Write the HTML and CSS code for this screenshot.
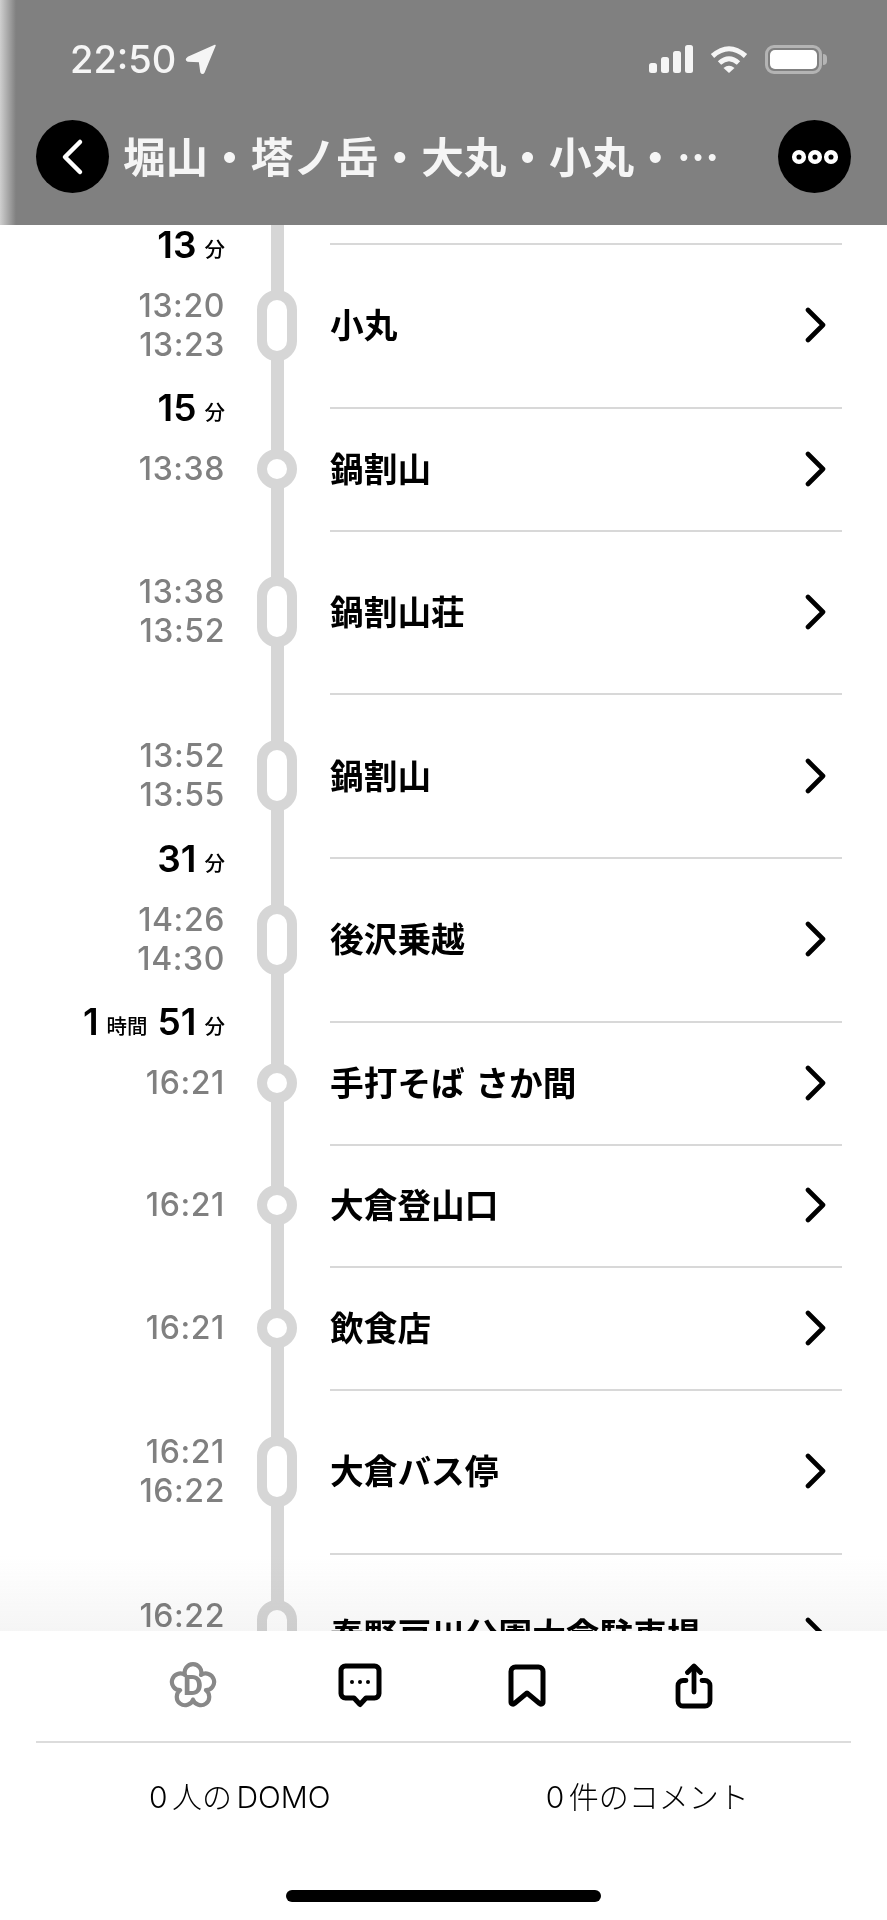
FILE: index.html
```html
<!DOCTYPE html>
<html lang="ja">
<head>
    <meta charset="utf-8">
    <title>堀山・塔ノ岳・大丸・小丸</title>
    <link rel="stylesheet" href="styles.css">
</head>
<body>
    <header class="top">
        <div class="status">
            <div class="clock">
                <span>22:50</span>
                <svg width="32" height="31" viewBox="0 0 32 31"><path d="M30 1.5 L3 13.5 Q0 15.5 3 17 L14.5 17.5 L16 28 Q17.5 30.5 19 28 Z" fill="#f5f5f5" stroke="#f5f5f5" stroke-width="1.5" stroke-linejoin="round"/></svg>
            </div>
            <div class="indicators">
                <svg width="44" height="28" viewBox="0 0 44 28"><g fill="#f5f5f5"><rect x="0" y="18" width="8" height="10" rx="2.5"/><rect x="12" y="12" width="8" height="16" rx="2.5"/><rect x="24" y="6" width="8" height="22" rx="2.5"/><rect x="36" y="0" width="8" height="28" rx="2.5"/></g></svg>
                <svg width="38" height="28" viewBox="0 0 38 28"><g fill="none" stroke="#f5f5f5" stroke-width="5"><path d="M2.5 11 Q19 -3.5 35.5 11"/><path d="M9.5 18 Q19 9.5 28.5 18"/></g><path d="M13.5 23 Q19 18.5 24.5 23 L19 28 Z" fill="#f5f5f5"/></svg>
                <div class="battery"><div class="charge"></div></div>
            </div>
        </div>
        <nav class="bar">
            <div class="round">
                <svg width="24" height="38" viewBox="0 0 24 38"><path d="M19 4 L4 19 L19 34" fill="none" stroke="#fff" stroke-width="4.5" stroke-linecap="round" stroke-linejoin="round"/></svg>
            </div>
            <h1 class="title">堀山・塔ノ岳・大丸・小丸・…</h1>
            <div class="round">
                <svg width="50" height="16" viewBox="0 0 50 16"><g fill="none" stroke="#fff" stroke-width="4.5"><circle cx="9" cy="8" r="4.8"/><circle cx="25" cy="8" r="4.8"/><circle cx="41" cy="8" r="4.8"/></g></svg>
            </div>
        </nav>
    </header>

    <main class="list">
        <div class="fade"></div>

        <div class="row row-top">
            <div class="times"></div>
            <div class="rail"></div>
            <div class="stop"></div>
        </div>
        <div class="leg"><b>13</b><small>分</small></div>

        <div class="row row-long">
            <div class="times"><span>13:20</span><span>13:23</span></div>
            <div class="rail"><i class="pill"></i></div>
            <div class="stop"><span class="name">小丸</span><svg class="chev" width="22" height="36" viewBox="0 0 22 36"><path d="M3 3 L18 18 L3 33" /></svg></div>
        </div>
        <div class="leg"><b>15</b><small>分</small></div>

        <div class="row">
            <div class="times"><span>13:38</span></div>
            <div class="rail"><i class="dot"></i></div>
            <div class="stop"><span class="name">鍋割山</span><svg class="chev" width="22" height="36" viewBox="0 0 22 36"><path d="M3 3 L18 18 L3 33" /></svg></div>
        </div>

        <div class="row row-long">
            <div class="times"><span>13:38</span><span>13:52</span></div>
            <div class="rail"><i class="pill"></i></div>
            <div class="stop"><span class="name">鍋割山荘</span><svg class="chev" width="22" height="36" viewBox="0 0 22 36"><path d="M3 3 L18 18 L3 33" /></svg></div>
        </div>

        <div class="row row-long">
            <div class="times"><span>13:52</span><span>13:55</span></div>
            <div class="rail"><i class="pill"></i></div>
            <div class="stop"><span class="name">鍋割山</span><svg class="chev" width="22" height="36" viewBox="0 0 22 36"><path d="M3 3 L18 18 L3 33" /></svg></div>
        </div>
        <div class="leg"><b>31</b><small>分</small></div>

        <div class="row row-long">
            <div class="times"><span>14:26</span><span>14:30</span></div>
            <div class="rail"><i class="pill"></i></div>
            <div class="stop"><span class="name">後沢乗越</span><svg class="chev" width="22" height="36" viewBox="0 0 22 36"><path d="M3 3 L18 18 L3 33" /></svg></div>
        </div>
        <div class="leg"><b>1</b><small>時間</small><b class="next">51</b><small>分</small></div>

        <div class="row">
            <div class="times"><span>16:21</span></div>
            <div class="rail"><i class="dot"></i></div>
            <div class="stop"><span class="name">手打そば さか間</span><svg class="chev" width="22" height="36" viewBox="0 0 22 36"><path d="M3 3 L18 18 L3 33" /></svg></div>
        </div>

        <div class="row">
            <div class="times"><span>16:21</span></div>
            <div class="rail"><i class="dot"></i></div>
            <div class="stop"><span class="name">大倉登山口</span><svg class="chev" width="22" height="36" viewBox="0 0 22 36"><path d="M3 3 L18 18 L3 33" /></svg></div>
        </div>

        <div class="row">
            <div class="times"><span>16:21</span></div>
            <div class="rail"><i class="dot"></i></div>
            <div class="stop"><span class="name">飲食店</span><svg class="chev" width="22" height="36" viewBox="0 0 22 36"><path d="M3 3 L18 18 L3 33" /></svg></div>
        </div>

        <div class="row row-long">
            <div class="times"><span>16:21</span><span>16:22</span></div>
            <div class="rail"><i class="pill"></i></div>
            <div class="stop"><span class="name">大倉バス停</span><svg class="chev" width="22" height="36" viewBox="0 0 22 36"><path d="M3 3 L18 18 L3 33" /></svg></div>
        </div>

        <div class="row row-long">
            <div class="times"><span>16:22</span><span></span></div>
            <div class="rail"><i class="pill"></i></div>
            <div class="stop"><span class="name">秦野戸川公園大倉駐車場</span><svg class="chev" width="22" height="36" viewBox="0 0 22 36"><path d="M3 3 L18 18 L3 33" /></svg></div>
        </div>
    </main>

    <footer class="bottom">
        <div class="actions">
            <svg width="48" height="48" viewBox="0 0 46 46">
                <path d="M15.36 12.48 A8 8 0 1 1 30.64 12.48 A8 8 0 1 1 35.36 27.02 A8 8 0 1 1 23 36 A8 8 0 1 1 10.64 27.02 A8 8 0 1 1 15.36 12.48 Z" fill="none" stroke="#888" stroke-width="4" stroke-linejoin="round"/>
                <text class="domo-mark" x="23" y="32" text-anchor="middle">D</text>
            </svg>
            <svg width="44" height="46" viewBox="0 0 44 46">
                <path d="M7.5 3 H36.5 a4.5 4.5 0 0 1 4.5 4.5 V30.5 a4.5 4.5 0 0 1 -4.5 4.5 H28 L22 41.5 L16 35 H7.5 a4.5 4.5 0 0 1 -4.5 -4.5 V7.5 a4.5 4.5 0 0 1 4.5 -4.5 Z" fill="none" stroke="#000" stroke-width="5" stroke-linejoin="round"/>
                <circle cx="14" cy="19" r="2"/><circle cx="22" cy="19" r="2"/><circle cx="30" cy="19" r="2"/>
            </svg>
            <svg width="38" height="44" viewBox="0 0 38 44">
                <path d="M7.5 3 H30.5 a4.5 4.5 0 0 1 4.5 4.5 V38 a2 2 0 0 1 -3.4 1.5 L19 29 L6.4 39.5 A2 2 0 0 1 3 38 V7.5 a4.5 4.5 0 0 1 4.5 -4.5 Z" fill="none" stroke="#000" stroke-width="5" stroke-linejoin="round"/>
            </svg>
            <svg width="38" height="46" viewBox="0 0 38 46" fill="none" stroke="#000" stroke-width="4.8" stroke-linecap="round" stroke-linejoin="round">
                <path d="M11 17.5 H8 a5 5 0 0 0 -5 5 V38 a5 5 0 0 0 5 5 H30 a5 5 0 0 0 5 -5 V22.5 a5 5 0 0 0 -5 -5 H27"/>
                <path d="M19 29 V4"/>
                <path d="M12.5 9.5 L19 3 L25.5 9.5"/>
            </svg>
        </div>
        <div class="stats">
            <span>0 人の DOMO</span>
            <span>0 件のコメント</span>
        </div>
        <div class="home"></div>
    </footer>
</body>
</html>
```

FILE: styles.css
```css
* {
    box-sizing: border-box;
}

body {
    margin: 0;
    width: 887px;
    height: 1920px;
    display: flex;
    flex-direction: column;
    overflow: hidden;
    background-color: #fff;
    color: #000;
    font-family: Inter, "Noto Sans CJK JP", sans-serif;
}

/* header */
.top {
    height: 225px;
    flex: none;
    padding: 44px 36px 32px;
    background: linear-gradient(90deg, #cfcfcf 0, #808080 16px) #808080;
    color: #f5f5f5;
}

.status {
    height: 30px;
    margin-bottom: 46px;
    padding: 0 29px 0 34px;
    display: flex;
    justify-content: space-between;
    align-items: center;
}

.clock {
    display: flex;
    align-items: center;
    gap: 9px;
    font-size: 38px;
    font-weight: 500;
}

.indicators {
    display: flex;
    align-items: center;
    gap: 17px;
}

.battery {
    position: relative;
    width: 57px;
    height: 29px;
    padding: 2px;
    border: 3px solid #b4b4b4;
    border-radius: 9px;
}

.battery::after {
    content: "";
    position: absolute;
    right: -8px;
    top: 6px;
    width: 4px;
    height: 11px;
    border-radius: 0 4px 4px 0;
    background-color: #b4b4b4;
}

.charge {
    height: 100%;
    border-radius: 5px;
    background-color: #fff;
}

.bar {
    display: flex;
    align-items: center;
    gap: 15px;
}

.round {
    width: 73px;
    height: 73px;
    flex: none;
    border-radius: 50%;
    background-color: #000;
    display: flex;
    justify-content: center;
    align-items: center;
}

.title {
    flex: 1;
    margin: 0 0 4px -1px;
    font-family: "Noto Sans CJK JP", sans-serif;
    font-size: 42.6px;
    font-weight: 700;
    white-space: nowrap;
    overflow: hidden;
}

/* timeline */
.list {
    flex: 1;
    position: relative;
    overflow: hidden;
    min-height: 0;
}

.row {
    height: 122.75px;
    display: flex;
}

.row-long {
    height: 163.75px;
}

.row-top {
    height: 20px;
}

.times {
    width: 225px;
    flex: none;
    padding-bottom: 3px;
    display: flex;
    flex-direction: column;
    justify-content: center;
    align-items: flex-end;
    gap: 9px;
    color: #808080;
    font-size: 32px;
    font-weight: 500;
    letter-spacing: 0.6px;
    line-height: 30px;
}

/* keeps the first time in place when the second is out of view */
.times span:empty {
    height: 30px;
}

.rail {
    width: 40px;
    flex: none;
    margin-left: 32px;
    padding-bottom: 3px;
    display: flex;
    align-items: center;
    background: linear-gradient(#d6d6d6, #d6d6d6) 14px 0 / 13px 100% no-repeat;
}

.dot,
.pill {
    display: block;
    width: 40px;
    border: 10px solid #d6d6d6;
    border-radius: 20px;
    background-color: #fff;
}

.dot {
    height: 40px;
}

.pill {
    height: 71px;
}

.stop {
    flex: 1;
    margin: 0 45px 0 33px;
    padding: 0 15px 1px 0;
    display: flex;
    justify-content: space-between;
    align-items: center;
    border-bottom: 2px solid #d8d8d8;
}

.name {
    margin-bottom: 3px;
    font-family: "Noto Sans CJK JP", sans-serif;
    font-size: 33.7px;
    font-weight: 700;
    word-spacing: 3px;
    white-space: nowrap;
}

.chev {
    flex: none;
}

.chev path {
    fill: none;
    stroke: #000;
    stroke-width: 4.6;
    stroke-linecap: round;
    stroke-linejoin: round;
}

.leg {
    position: relative;
    z-index: 1;
    width: 225px;
    height: 0;
    margin-top: -1px;
    margin-bottom: 1px;
    display: flex;
    justify-content: flex-end;
    align-items: center;
}

.leg b {
    font-size: 37px;
    font-weight: 600;
}

.leg b.next {
    margin-left: 10px;
}

.leg small {
    margin-left: 8px;
    margin-top: 7px;
    font-size: 20.5px;
    font-weight: 500;
}

/* soft shade behind the last rows, above the footer */
.fade {
    position: absolute;
    left: 0;
    right: 0;
    bottom: 0;
    height: 75px;
    background: linear-gradient(rgba(245, 245, 245, 0), #f5f5f5);
    mix-blend-mode: multiply;
}

/* footer */
.bottom {
    height: 289px;
    flex: none;
    position: relative;
    background-color: #fff;
}

.actions {
    height: 110px;
    padding-left: 109px;
    display: grid;
    grid-template-columns: repeat(4, 167px);
    justify-items: center;
    align-items: center;
}

.domo-mark {
    font-size: 26px;
    font-weight: 800;
    fill: #888;
}

.stats {
    height: 106px;
    margin: 0 36px;
    border-top: 2px solid #dcdcdc;
    display: grid;
    grid-template-columns: 1fr 1fr;
    justify-items: center;
    align-items: center;
    font-size: 30px;
    font-weight: 300;
    word-spacing: -4px;
}

.home {
    width: 315px;
    height: 12px;
    margin: 43px auto 0;
    border-radius: 6px;
    background-color: #000;
}
```
